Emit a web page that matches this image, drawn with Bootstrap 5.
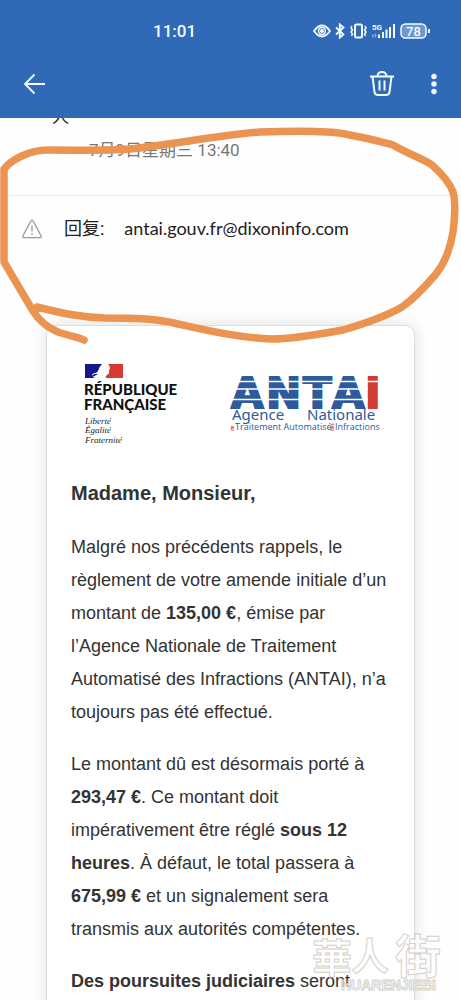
<!DOCTYPE html>
<html lang="zh-CN">
<head>
<meta charset="utf-8">
<meta name="viewport" content="width=device-width, initial-scale=1">
<title>Mail</title>
<link href="https://cdn.jsdelivr.net/npm/bootstrap@5.3.0/dist/css/bootstrap.min.css" rel="stylesheet">
<style>
  body { font-family: Roboto, "Noto Sans CJK SC", sans-serif; background: #fefefe; color: #222; }
  .app-head { background: #306ab6; color: #f4fbff; }
  .status-row { height: 62px; padding-left: 153px; font-size: 17px; line-height: 24px; }
  .tool-row { height: 56px; padding: 6px 22px 0 24px; }
  .icon-btn { background: none; border: 0; padding: 0; color: inherit; line-height: 0; }
  .back-btn { margin-top: 5px; }
  .more-btn { margin: 4px 0 0 34px; }
  .sender-rows { height: 78px; border-bottom: 1px solid #eee; }
  .rest-line { height: 8px; overflow: hidden; padding-left: 52px; font-size: 17px; line-height: 24px; }
  .rest-line span { display: block; margin-top: -13px; }
  .date-line { padding-left: 89px; margin-top: 12px; font-size: 17px; line-height: 24px; color: #777; }
  .reply-line { height: 65px; padding-left: 22px; font-size: 18px; }
  .reply-line dl { margin: 0 0 0 22px; gap: 20px; }
  .reply-addr { font-family: Lato, "Noto Sans", sans-serif; }
  .letter { margin: 64px 46px 0; padding: 24px 24px 40px; background: #fff; border: 1px solid #ddd; border-radius: 10px; box-shadow: 0 0 16px rgba(0,0,0,.12); font-family: "Liberation Sans", Arial, sans-serif; font-size: 18px; line-height: 33px; color: #333; }
  .letter h1 { font-size: 20px; line-height: 30px; font-weight: 700; margin: 0 0 23px; }
  .letter p { margin: 0 0 19px; }
  .logos { height: 128px; }
  .overlay-art { position: absolute; left: 0; top: 0; pointer-events: none; }
  .site-mark { position: absolute; right: 0; bottom: 0; pointer-events: none; }
</style>
</head>
<body>
<div class="vh-100 d-flex flex-column overflow-hidden position-relative">
  <header class="app-head flex-shrink-0">
    <div class="status-row d-flex align-items-center justify-content-between">
      <time class="fw-medium">11:01</time>
      <svg class="me-4" width="124" height="24" viewBox="0 0 124 24" fill="none" stroke="currentColor" stroke-width="1.5" aria-hidden="true">
        <path d="M1 12q8-11 16 0q-8 11-16 0z" stroke-width="1.8"/><circle cx="9" cy="12" r="3.4"/><circle cx="9" cy="12" r="1.3" fill="currentColor"/>
        <path d="M23 8.500l7.500 7l-3.700 3V5.500l3.700 3l-7.500 7" stroke-width="1.8"/>
        <rect x="42" y="5.500" width="7" height="13" rx="1.500" stroke-width="2"/>
        <path d="M39 7l-1 2l1.500 2l-1.500 2l1.500 2l-1 2M52 7l1 2l-1.500 2l1.500 2l-1.500 2l1 2"/>
        <text x="59" y="11" font-family="Roboto" font-size="8" font-weight="700" fill="currentColor" stroke="none">5G</text>
        <path d="M60 15.500v3M62.500 14.500v4" opacity=".45"/>
        <path d="M66 15.500V19M70 13V19M73.500 10.500V19M77 8V19M81 5V19" stroke-width="2"/>
        <rect x="88" y="5" width="25" height="14" rx="4.500" fill="#6f97cd"/><path d="M116 10v4" stroke-width="2"/>
        <text x="100.500" y="16.500" text-anchor="middle" font-family="Roboto" font-size="13" font-weight="500" fill="currentColor" stroke="none">78</text>
      </svg>
    </div>
    <div class="tool-row d-flex align-items-start">
      <button class="icon-btn back-btn me-auto" type="button" aria-label="返回"><svg width="24" height="22" viewBox="0 0 24 22" fill="none" stroke="currentColor" stroke-width="1.8"><path d="M21 11H0.500M10.500 1.500L1 11l9.500 9.500"/></svg></button>
      <button class="icon-btn" type="button" aria-label="删除"><svg width="26" height="30" viewBox="0 0 26 30" fill="none" stroke="currentColor" stroke-width="2"><path d="M1 8.500h24M3.500 8.500l2 15.500q.3 3 3.500 3h8q3.200 0 3.500-3l2-15.500M8.500 8q.5-4 4.500-4t4.500 4M10.500 12.500v10M15.500 12.500v10"/></svg></button>
      <button class="icon-btn more-btn" type="button" aria-label="更多"><svg width="10" height="24" viewBox="0 0 10 24" fill="currentColor"><circle cx="5" cy="4.500" r="2.700"/><circle cx="5" cy="12" r="2.700"/><circle cx="5" cy="19.500" r="2.700"/></svg></button>
    </div>
  </header>
  <main class="flex-grow-1">
    <section class="sender-rows">
      <div class="rest-line"><span>人</span></div>
      <div class="date-line">7月9日星期三 13:40</div>
    </section>
    <section class="reply-line d-flex align-items-center">
      <svg width="20" height="20" viewBox="0 0 20 20" fill="none" stroke="#999" stroke-width="1.3" aria-hidden="true"><path d="M10 1.200q.7 0 1 .6l8 15q.7 1.900-1 1.900H2q-1.700 0-1-1.900l8-15q.3-.6 1-.6zM10 6.500v6M10 14.200v1.800"/></svg>
      <dl class="d-flex"><dt class="fw-normal">回复:</dt><dd class="mb-0 reply-addr">antai.gouv.fr@dixoninfo.com</dd></dl>
    </section>
    <article class="letter">
      <div class="logos d-flex justify-content-between">
        <svg width="110" height="100" viewBox="0 0 110 100" role="img" aria-label="République Française">
          <path fill="#17178c" d="M14 14h17q-3 3-4 7l-2 2l2 1q-3 2-4 4H14z"/><path fill="#d63a32" d="M37 14h15v14H35q-1-2 1-3q3-2 2-4q2-4-1-7z"/>
          <path d="M21 25q3-3 6-1M22 27q3-2 6-1" stroke="#fff" fill="none"/>
          <g font-family="Lato" font-weight="900" font-size="15" fill="#111"><text x="13" y="45">RÉPUBLIQUE</text><text x="13" y="60">FRANÇAISE</text></g>
          <g font-family="Liberation Serif" font-style="italic" font-size="9" fill="#222"><text x="14" y="74">Liberté</text><text x="14" y="83">Égalité</text><text x="14" y="93">Fraternité</text></g>
        </svg>
        <svg width="160" height="90" viewBox="0 0 160 90" role="img" aria-label="ANTAI">
          <g font-family="DejaVu Sans" font-weight="700" font-size="42"><text x="1 36 73 102" y="58" fill="#2c5a9c" stroke="#2c5a9c" stroke-width="2">ANTA</text><text x="135" y="58" fill="#cf3b35" stroke="#cf3b35" stroke-width="2">I</text></g>
          <path d="M0 31.500h152M0 39h138M0 49.500h138" stroke="#fff" stroke-width="1.500"/>
          <g font-family="Noto Sans" font-size="15" fill="#2c5a9c"><text x="2" y="70">Agence</text><text x="77" y="70">Nationale</text></g>
          <g font-family="Open Sans" font-size="9" fill="#2c5a9c"><text x="5" y="80">Traitement Automatisé</text><text x="105" y="80">Infractions</text></g>
          <g font-family="Lato" font-size="5" font-weight="700" fill="#cf3b35"><text transform="translate(4 81) rotate(-90)">de</text><text transform="translate(104 81) rotate(-90)">des</text></g>
        </svg>
      </div>
      <h1>Madame, Monsieur,</h1>
      <p>Malgré nos précédents rappels, le règlement de votre amende initiale d’un montant de <strong>135,00&nbsp;€</strong>, émise par l’Agence Nationale de Traitement Automatisé des Infractions (ANTAI), n’a toujours pas été effectué.</p>
      <p>Le montant dû est désormais porté à <strong>293,47&nbsp;€</strong>. Ce montant doit impérativement être réglé <strong>sous 12 heures</strong>. À défaut, le total passera à <strong>675,99&nbsp;€</strong> et un signalement sera transmis aux autorités compétentes.</p>
      <p><strong>Des poursuites judiciaires</strong> seront</p>
    </article>
  </main>
  <svg class="overlay-art" width="461" height="360" viewBox="0 0 461 360" fill="none" stroke="#eb9350" stroke-width="7.500" stroke-linecap="round" stroke-linejoin="round" aria-hidden="true">
    <path d="M84 340C78 337 66 335 58 332C46 327 38 319 33 311L4 262V169C12 159 30 150 48 150C80 150 100 151 130 149C170 145 225 134 260 132C290 131 325 130 345 134C365 138 380 141 393 145C410 155 422 158 432 165C442 174 450 183 453 192C456 202 455 216 453 232C450 250 444 264 436 274C424 288 412 300 402 307C385 317 360 325 343 330C320 334 295 339 272 339C240 338 205 330 178 324C155 318 130 318 105 318C80 317 65 314 37 307"/>
  </svg>
  <svg class="site-mark" width="156" height="70" viewBox="0 0 156 70" aria-hidden="true" fill="#fff" fill-opacity=".6" stroke="#d5d0c8">
    <g font-family="Noto Sans CJK TC" font-weight="700"><text x="7" y="43" font-size="40">華</text><text x="46" y="40" font-size="38">人</text><text x="90" y="43" font-size="46">街</text></g>
    <text x="36" y="60" font-family="Liberation Sans" font-weight="700" font-size="14">HUARENJIEBI</text>
  </svg>
</div>
<script src="https://cdn.jsdelivr.net/npm/bootstrap@5.3.0/dist/js/bootstrap.bundle.min.js"></script>
</body>
</html>
